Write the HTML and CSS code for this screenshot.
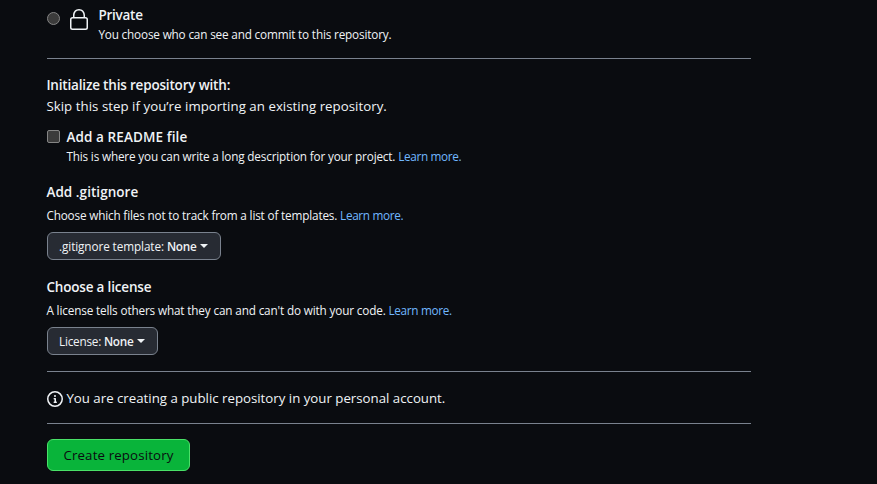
FILE: index.html
```html
<!DOCTYPE html>
<html lang="en">
<head>
<meta charset="utf-8">
<title>Create a new repository</title>
<link rel="stylesheet" href="styles.css">
</head>
<body>
<main class="form">
  <section class="visibility">
    <span class="radio"></span>
    <svg class="lock" width="24" height="24" viewBox="0 0 24 24" fill="#f0f3f6"><path fill-rule="evenodd" d="M6 9V7.25C6 3.845 8.503 1 12 1s6 2.845 6 6.25V9h.5a2.5 2.5 0 0 1 2.5 2.5v8a2.5 2.5 0 0 1-2.5 2.5h-13A2.5 2.5 0 0 1 3 19.500v-8A2.5 2.5 0 0 1 5.500 9Zm-1.500 2.500v8a1 1 0 0 0 1 1h13a1 1 0 0 0 1-1v-8a1 1 0 0 0-1-1h-13a1 1 0 0 0-1 1Zm3-4.250V9h9V7.250c0-2.670-1.922-4.750-4.500-4.750-2.578 0-4.500 2.080-4.500 4.750Z"/></svg>
    <div>
      <div class="title private-title">Private</div>
      <div class="note">You choose who can see and commit to this repository.</div>
    </div>
  </section>

  <section class="init">
    <div class="title">Initialize this repository with:</div>
    <div class="text skip">Skip this step if you’re importing an existing repository.</div>
    <div class="readme">
      <span class="checkbox"></span>
      <div>
        <div class="title readme-title">Add a README file</div>
        <div class="note">This is where you can write a long description for your project. <a class="link">Learn more.</a></div>
      </div>
    </div>
  </section>

  <section class="option gitignore">
    <div class="title gitignore-title">Add .gitignore</div>
    <div class="note option-note">Choose which files not to track from a list of templates. <a class="link">Learn more.</a></div>
    <button class="select select-gitignore"><span>.gitignore template: <b>None</b></span><i class="caret"></i></button>
  </section>

  <section class="option license">
    <div class="title">Choose a license</div>
    <div class="note option-note license-note">A license tells others what they can and can't do with your code. <a class="link">Learn more.</a></div>
    <button class="select select-license"><span>License: <b>None</b></span><i class="caret"></i></button>
  </section>

  <section class="summary">
    <svg class="info" width="16" height="16" viewBox="0 0 16 16" fill="#f0f3f6"><path d="M0 8a8 8 0 1 1 16 0A8 8 0 0 1 0 8Zm8-6.500a6.500 6.500 0 1 0 0 13 6.500 6.500 0 0 0 0-13ZM6.500 7.750A.75.75 0 0 1 7.250 7h1a.75.75 0 0 1 .75.75v2.750h.25a.75.75 0 0 1 0 1.500h-2a.75.75 0 0 1 0-1.500h.25v-2h-.25a.75.75 0 0 1-.75-.75ZM8 6a1 1 0 1 1 0-2 1 1 0 0 1 0 2Z"/></svg>
    <span class="text">You are creating a public repository in your personal account.</span>
  </section>

  <button class="create">Create repository</button>
</main>
</body>
</html>
```
FILE: styles.css
```css
* { box-sizing: border-box; }

body {
  margin: 0;
  background: #0a0c10;
  color: #f0f3f6;
  font-family: "Open Sans", "Noto Sans", sans-serif;
  font-size: 13.25px;
  line-height: 20px;
}

.form {
  width: 704px;
  margin-left: 47px;
  padding-top: 5px;
}

.title, .note, .text { margin-left: -0.6px; }
.title { font-size: 13.5px; font-weight: 600; letter-spacing: -0.18px; }
.private-title { letter-spacing: -0.25px; }
.readme-title { letter-spacing: 0.1px; }
.gitignore-title { letter-spacing: 0.05px; }
.note {
  padding-bottom: 2px;
  font-size: 11.75px;
  line-height: 18px;
  letter-spacing: -0.17px;
}
.skip { letter-spacing: 0.04px; }
.link { color: #71b7ff; letter-spacing: -0.33px; }

.visibility {
  display: flex;
  height: 54px;
  border-bottom: 1px solid #7a828e;
}

.radio,
.checkbox {
  flex: none;
  width: 13px;
  height: 13px;
  border: 1px solid #858585;
  background: #3b3b3b;
}

.radio { margin-top: 7px; border-radius: 50%; }
.lock { margin: 3px 8px 0 7px; }

.init { padding-top: 16px; }
.init .skip { margin-top: 1px; }

.readme { display: flex; margin-top: 11px; }
.checkbox { margin: 3px 7px 0 0; border-radius: 2px; }

.option { display: flex; flex-direction: column; align-items: flex-start; }
.gitignore { margin-top: 15px; }
.license { margin-top: 17px; }
.option-note { margin-top: 4px; margin-bottom: 6px; }
.license-note { letter-spacing: -0.15px; }

.select {
  display: flex;
  align-items: center;
  justify-content: space-between;
  height: 28px;
  padding: 0 12px 0 11px;
  border: 1px solid #7a828e;
  border-radius: 6px;
  background: #272b33;
  color: #f0f3f6;
  font: 11.75px/20px "Open Sans", sans-serif;
  letter-spacing: -0.1px;
}

.select b { font-weight: 600; letter-spacing: -0.25px; }
.select-gitignore { width: 174px; }
.select-license { width: 111px; letter-spacing: -0.22px; }

.caret {
  border: 4px solid transparent;
  border-top-color: #f0f3f6;
  border-bottom: 0;
}

.summary {
  display: flex;
  align-items: center;
  gap: 4px;
  height: 53px;
  margin-top: 16px;
  border: solid #7a828e;
  border-width: 1px 0;
}

.info { position: relative; top: 1px; }

.create {
  display: block;
  width: 143px;
  height: 32px;
  margin-top: 15px;
  padding: 0;
  border: 1px solid #4ae168;
  border-radius: 6px;
  background: #09b43a;
  color: #0a0c10;
  font: 13.25px/20px "Open Sans", sans-serif;
  letter-spacing: 0.15px;
}
```
